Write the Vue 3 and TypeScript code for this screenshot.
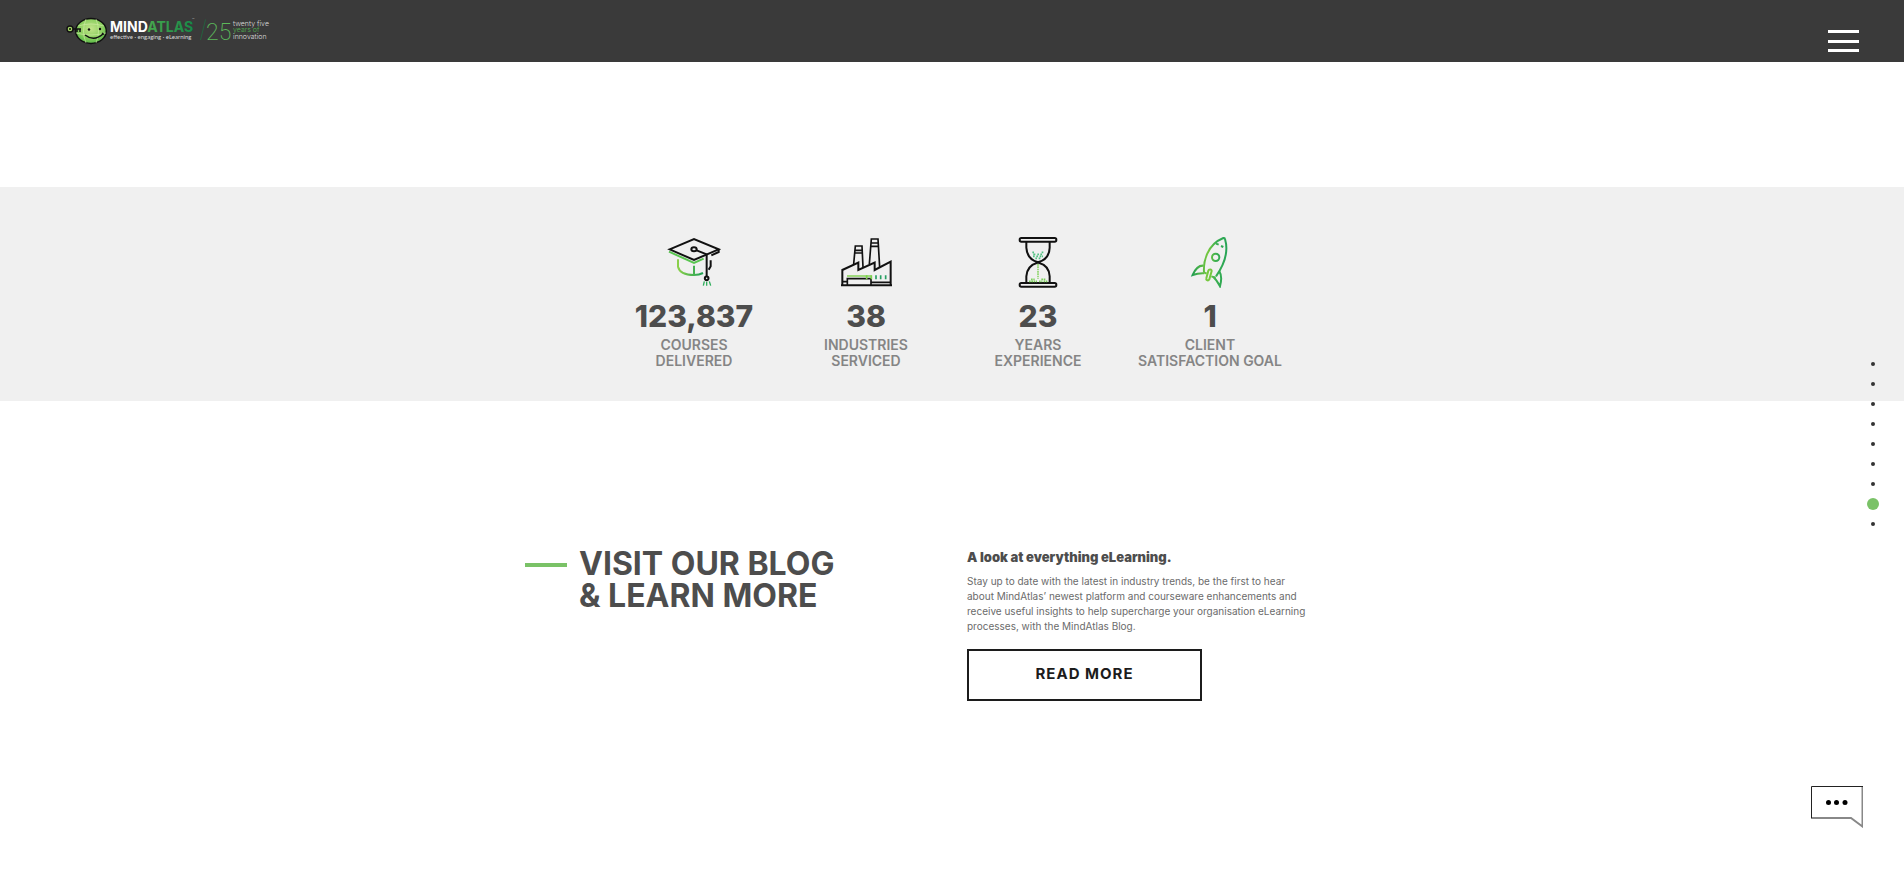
<script setup lang="ts">
import { ref } from 'vue'

interface Stat {
  icon: 'cap' | 'factory' | 'hourglass' | 'rocket'
  value: string
  label: [string, string]
}

const stats: Stat[] = [
  { icon: 'cap', value: '123,837', label: ['COURSES', 'DELIVERED'] },
  { icon: 'factory', value: '38', label: ['INDUSTRIES', 'SERVICED'] },
  { icon: 'hourglass', value: '23', label: ['YEARS', 'EXPERIENCE'] },
  { icon: 'rocket', value: '1', label: ['CLIENT', 'SATISFACTION GOAL'] },
]

const sectionCount = 9
const activeSection = ref(8)
</script>

<template>
  <div class="page">
    <header class="header">
      <a class="logo" href="#" aria-label="MindAtlas home">
        <svg width="230" height="55" viewBox="0 0 230 55">
          <defs>
            <radialGradient id="head" cx="0.5" cy="0.4" r="0.6">
              <stop offset="0" stop-color="#c3e48b" />
              <stop offset="0.6" stop-color="#8fd062" />
              <stop offset="1" stop-color="#58b947" />
            </radialGradient>
            <linearGradient id="atlas" x1="0" x2="1">
              <stop offset="0" stop-color="#72c053" />
              <stop offset="1" stop-color="#168a48" />
            </linearGradient>
          </defs>
          <circle cx="15" cy="19" r="3" fill="#a5d765" stroke="#111" stroke-width="1.4" transform="translate(0 5)" />
          <circle cx="15" cy="24" r="1" fill="#111" />
          <ellipse cx="36" cy="26" rx="15.300" ry="12.400" fill="url(#head)" stroke="#111" stroke-width="1.500" />
          <path d="M23 21Q36 17 49 21M21 28Q36 32 51 28M31 14Q26 26 31 38M41 14Q46 26 41 38" fill="none" stroke="#d5efaa" stroke-width="0.600" />
          <path d="M18 24h8M22 24v3M25 24v3" stroke="#111" stroke-width="1.500" fill="none" />
          <circle cx="34" cy="24.500" r="1.200" fill="#111" />
          <circle cx="45" cy="24" r="1.200" fill="#111" />
          <path d="M30 30Q39 37 48 29M47 28l2 1.500" stroke="#111" stroke-width="1.500" fill="none" />
          <text class="brand" x="55" y="27">MIND<tspan fill="url(#atlas)">ATLAS</tspan></text>
          <text class="trade" x="137" y="16">™</text>
          <text class="tagline" x="55" y="34">effective · engaging · eLearning</text>
          <path d="M150.500 14.500L145.500 35" stroke="#20693f" stroke-width="0.800" />
          <text class="years" x="151" y="35">25</text>
          <text class="motto" x="178" y="21">twenty five</text>
          <text class="motto green" x="178" y="27">years of</text>
          <text class="motto" x="178" y="34">innovation</text>
        </svg>
      </a>
      <button class="menu" type="button" aria-label="Open menu">
        <span></span><span></span><span></span>
      </button>
    </header>

    <main>
      <section class="stats">
        <ul class="stat-list">
          <li v-for="stat in stats" :key="stat.icon" class="stat">
            <svg v-if="stat.icon === 'cap'" class="icon" viewBox="34 32 168 156">
              <defs>
                <linearGradient id="capGreen" x1="0" x2="1">
                  <stop offset="0" stop-color="#8bd04a" />
                  <stop offset="1" stop-color="#1fa055" />
                </linearGradient>
              </defs>
              <path d="M43 79L118 113L147 100" stroke="#59c550" />
              <path d="M70 102V124Q76 149 118 149Q134 149 145 143M118 121V149" stroke="url(#capGreen)" />
              <path d="M45 72L118 41L192 72L118 104Z" />
              <path d="M168 105V123L162 133M126 75L156 87V153M192 72V80L170 90" />
              <ellipse cx="118" cy="72" rx="8" ry="6" />
              <circle cx="156" cy="159" r="5.500" />
              <path d="M149 168L146 181M156 169V181M164 168L168 181" stroke="#2fae5c" stroke-width="4" />
            </svg>

            <svg v-else-if="stat.icon === 'factory'" class="icon" viewBox="24 32 168 156">
              <path d="M37 179V134L85 112V134L134 112V134L182 109V179M33 180H186" />
              <path d="M71 116L76 62H96L99 126M75 75H97M75 83H97M118 116L124 41H144L149 126M123 53H146M122 63H147" stroke-width="5" />
              <path d="M52 179V160H123V179M37 169H52M123 171H182" stroke-width="5" />
              <path d="M51 152H125" stroke="#79cf46" stroke-width="4" />
              <path d="M110 150V162M124 150V162" stroke="#7bd04a" stroke-width="5" />
              <path d="M138 150V162M152 150V162M167 150V162" stroke="#279f62" stroke-width="5" />
            </svg>

            <svg v-else-if="stat.icon === 'hourglass'" class="icon" viewBox="30 32 168 156">
              <rect x="59" y="38" width="110" height="11" rx="5" />
              <rect x="59" y="173" width="110" height="11" rx="5" />
              <path d="M79 50V67Q81 101 112 110H116Q148 101 149 67V50M79 172V153Q81 121 112 112H116Q148 121 149 153V172" />
              <path d="M114 116V160" stroke="#8dd56a" stroke-width="5" stroke-dasharray="5 2" />
              <path d="M97 81H103M125 81H132M100 87H108M112 87H118M121 87H128M99 93H106M109 93H116M119 93H129M106 99H112M116 99H123" stroke="#53c283" stroke-width="5" stroke-dasharray="5 2" />
              <path d="M93 162H104M124 162H138M87 168H99M101 168H111M117 168H127M131 168H142" stroke="#7ccf5b" stroke-width="5" stroke-dasharray="5 2" />
            </svg>

            <svg v-else class="icon rocket" viewBox="21 32 168 156">
              <defs>
                <linearGradient id="rocketGreen" x1="52" x2="156" y1="0" y2="0" gradientUnits="userSpaceOnUse">
                  <stop offset="0" stop-color="#249f51" />
                  <stop offset="0.450" stop-color="#76c83e" />
                  <stop offset="0.700" stop-color="#38ad50" />
                  <stop offset="1" stop-color="#27a456" />
                </linearGradient>
              </defs>
              <path d="M87 141C85 108 96 58 145 38Q149 37 150 41C162 81 144 123 123 153M87 141L95 145M109 153L122 157" />
              <path d="M86 121Q66 119 53 149Q70 143 88 144M133 138Q143 153 135 183Q125 163 114 154" />
              <path d="M123 55L131 58M138 62L145 65" />
              <circle cx="122" cy="96" r="11" />
              <path d="M103 133Q109 131 110 137L103 162Q100 167 95 164Q93 162 94 159L100 136Q101 134 103 133Z" stroke="#76c83e" />
            </svg>
            <strong class="value">{{ stat.value }}</strong>
            <span class="label">{{ stat.label[0] }}<br />{{ stat.label[1] }}</span>
          </li>
        </ul>
      </section>

      <section class="blog">
        <div class="blog-title">
          <span class="rule"></span>
          <h2>VISIT OUR BLOG<br />&amp; LEARN MORE</h2>
        </div>
        <div class="blog-copy">
          <h3>A look at everything eLearning.</h3>
          <p>
            Stay up to date with the latest in industry trends, be the first to hear<br />
            about MindAtlas’ newest platform and courseware enhancements and<br />
            receive useful insights to help supercharge your organisation eLearning<br />
            processes, with the MindAtlas Blog.
          </p>
          <a class="read-more" href="#">READ MORE</a>
        </div>
      </section>
    </main>

    <nav class="dots" aria-label="Page sections">
      <button
        v-for="n in sectionCount"
        :key="n"
        type="button"
        :class="{ active: n === activeSection }"
        :aria-label="`Section ${n}`"
        @click="activeSection = n"
      >
        <span></span>
      </button>
    </nav>

    <button class="chat" type="button" aria-label="Open chat">
      <svg width="52" height="42" viewBox="0 0 52 42">
        <path d="M51.500 0V40.500L40 32H0" fill="none" stroke="#888" stroke-width="2" />
        <path d="M0.500 32V0.500H52" fill="none" stroke="#222" />
        <circle cx="17.500" cy="16.500" r="2.500" />
        <circle cx="25.500" cy="16.500" r="2.500" />
        <circle cx="34" cy="16.500" r="2.500" />
      </svg>
    </button>
  </div>
</template>

<style>
body {
  margin: 0;
  background: #fff;
}
</style>

<style scoped>
.page {
  font-family: Inter, 'Open Sans', sans-serif;
  color: #4d4d4d;
}

button {
  padding: 0;
  border: 0;
  background: none;
  cursor: pointer;
}

.header {
  display: flex;
  justify-content: space-between;
  height: 62px;
  padding: 0 45px 0 55px;
  box-sizing: border-box;
  background: #3a3a3a;
}

.logo {
  padding-top: 5px;
}

.logo svg {
  display: block;
}

.brand {
  font-size: 14px;
  font-weight: 700;
  fill: #fff;
}

.trade {
  font-size: 4px;
  fill: #aaa;
}

.tagline {
  font-family: Lato, sans-serif;
  font-size: 6px;
  fill: #ddd;
}

.years {
  font-family: Roboto, sans-serif;
  font-size: 23px;
  font-weight: 200;
  fill: #5cb85a;
}

.motto {
  font-size: 7px;
  font-weight: 300;
  fill: #ddd;
}

.motto.green {
  fill: #4fae50;
}

.menu {
  display: flex;
  flex-direction: column;
  justify-content: space-between;
  width: 31px;
  height: 22px;
  margin-top: 30px;
}

.menu span {
  height: 3px;
  width: 100%;
  background: #fff;
}

.stats {
  margin-top: 125px;
  padding: 49px 0 32px;
  background: #f0f0f0;
}

.stat-list {
  display: grid;
  grid-template-columns: repeat(4, 1fr);
  max-width: 688px;
  margin: 0 auto;
  padding: 0;
  list-style: none;
}

.stat {
  display: flex;
  flex-direction: column;
  align-items: center;
  text-align: center;
}

.icon {
  width: 56px;
  height: 52px;
  fill: none;
  stroke: #111;
  stroke-width: 6px;
}

.icon.rocket {
  stroke: url(#rocketGreen);
}

.value {
  margin-top: 10px;
  font-size: 30px;
  line-height: 36px;
  font-weight: 800;
}

.label {
  margin-top: 3px;
  font-size: 14px;
  line-height: 16px;
  font-weight: 600;
  white-space: nowrap;
  color: #858585;
}

.blog {
  display: grid;
  grid-template-columns: 1fr 1fr;
  max-width: 884px;
  margin: 0 auto;
  padding: 147px 0;
}

.blog-title,
.blog-copy {
  padding: 0 15px;
}

.blog-title {
  display: flex;
  gap: 12px;
}

.rule {
  width: 42px;
  height: 4px;
  margin-top: 15px;
  background: #7ac267;
}

h2,
h3,
p {
  margin: 0;
}

h2 {
  font-size: 32px;
  line-height: 32px;
  font-weight: 700;
}

h3 {
  font-size: 13px;
  line-height: 18px;
  font-weight: 900;
}

p {
  margin: 8px 0 15px;
  font-size: 10px;
  line-height: 15px;
  font-weight: 400;
  white-space: nowrap;
  color: #6b6b6b;
}

.read-more {
  display: block;
  width: 235px;
  box-sizing: border-box;
  padding-bottom: 2px;
  border: 2px solid #1c1c1c;
  font-size: 15px;
  line-height: 46px;
  font-weight: 700;
  letter-spacing: 1px;
  text-align: center;
  text-decoration: none;
  color: #1c1c1c;
}

.dots {
  position: fixed;
  top: 50%;
  right: 21px;
  transform: translateY(-50%);
}

.dots button {
  display: flex;
  align-items: center;
  justify-content: center;
  width: 20px;
  height: 20px;
}

.dots span {
  width: 4px;
  height: 4px;
  border-radius: 50%;
  background: #333;
}

.dots .active span {
  width: 12px;
  height: 12px;
  background: #7ac267;
}

.chat {
  position: fixed;
  right: 41px;
  bottom: 60px;
}

.chat svg {
  display: block;
}
</style>
